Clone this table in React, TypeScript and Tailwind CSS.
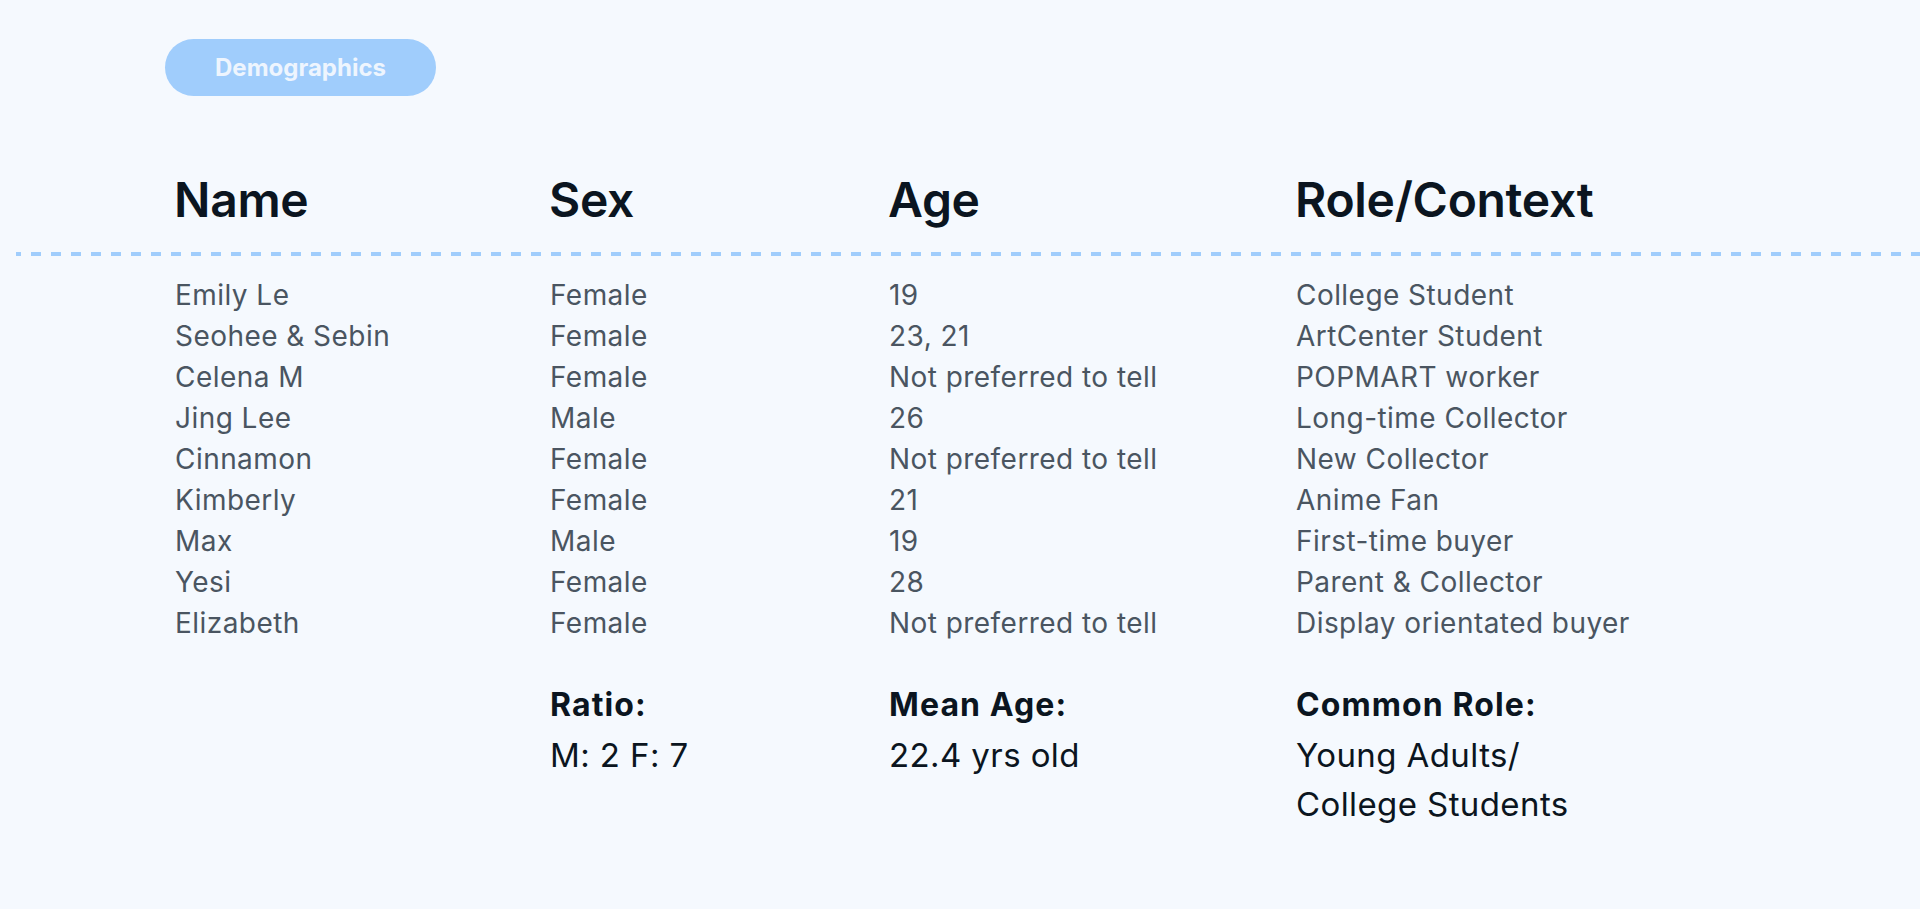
import React from "react";

const rows: [string, string, string, string][] = [
  ["Emily Le", "Female", "19", "College Student"],
  ["Seohee & Sebin", "Female", "23, 21", "ArtCenter Student"],
  ["Celena M", "Female", "Not preferred to tell", "POPMART worker"],
  ["Jing Lee", "Male", "26", "Long-time Collector"],
  ["Cinnamon", "Female", "Not preferred to tell", "New Collector"],
  ["Kimberly", "Female", "21", "Anime Fan"],
  ["Max", "Male", "19", "First-time buyer"],
  ["Yesi", "Female", "28", "Parent & Collector"],
  ["Elizabeth", "Female", "Not preferred to tell", "Display orientated buyer"],
];

const cols = "grid grid-cols-[375px_339px_407px_1fr]";

export default function App() {
  return (
    <div
      className="w-[1920px] h-[909px] bg-[#f5f9fe] overflow-hidden"
      style={{ fontFamily: "Inter, 'Noto Sans', sans-serif" }}
    >
      <div className="pl-[165px] pt-[39px]">
        <div className="w-[271px] h-[57px] rounded-full bg-[#a0cdfc] flex items-center justify-center text-[24px] font-bold text-[#eef5fe] tracking-[0px]">
          Demographics
        </div>
      </div>

      <div className={`${cols} pl-[174px] mt-[74px] text-[48px] font-semibold leading-[60px] text-[#0b1520] tracking-[-0.3px]`}>
        <div>Name</div>
        <div>Sex</div>
        <div>Age</div>
        <div>Role/Context</div>
      </div>

      <div className="ml-[16px] mt-[22px] h-[4px] bg-[repeating-linear-gradient(90deg,#a0cdfc_0_5px,transparent_5px_15px,#a0cdfc_15px_20px)]" />

      <div className="pl-[175px] mt-[19px] text-[28px] leading-[41px] text-[#4a5561] tracking-[0.45px]">
        {rows.map((r, i) => (
          <div key={i} className={cols}>
            <div>{r[0]}</div>
            <div>{r[1]}</div>
            <div>{r[2]}</div>
            <div>{r[3]}</div>
          </div>
        ))}
      </div>

      <div className={`${cols} pl-[175px] mt-[41px] text-[#0b1520]`}>
        <div />
        <div>
          <div className="text-[32px] font-bold leading-[40px] tracking-[1.1px]">Ratio:</div>
          <div className="text-[33px] leading-[49px] mt-[6px] tracking-[0.4px]">M: 2 F: 7</div>
        </div>
        <div>
          <div className="text-[32px] font-bold leading-[40px] tracking-[1.1px]">Mean Age:</div>
          <div className="text-[33px] leading-[49px] mt-[6px] tracking-[0.4px]">22.4 yrs old</div>
        </div>
        <div>
          <div className="text-[32px] font-bold leading-[40px] tracking-[1.1px]">Common Role:</div>
          <div className="text-[33px] leading-[49px] mt-[6px] tracking-[0.4px]">
            Young Adults/
            <br />
            College Students
          </div>
        </div>
      </div>
    </div>
  );
}
